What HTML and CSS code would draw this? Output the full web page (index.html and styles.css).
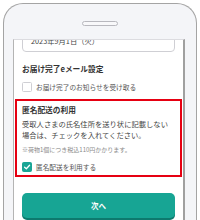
FILE: index.html
```html
<!DOCTYPE html>
<html lang="ja">
<head>
<meta charset="utf-8">
<title>匿名配送</title>
<link rel="stylesheet" href="styles.css">
</head>
<body>
<div class="phone">
  <div class="speaker"></div>
  <div class="screen">
    <div class="content">
      <div class="date-input">2023年9月1日（火）</div>
      <h2 class="sec-title">お届け完了eメール設定</h2>
      <label class="check-row">
        <span class="box"></span>
        <span class="check-label">お届け完了のお知らせを受け取る</span>
      </label>
      <div class="highlight">
        <h2 class="sec-title">匿名配送の利用</h2>
        <p class="desc">受取人さまの氏名住所を送り状に記載しない<br>場合は、チェックを入れてください。</p>
        <p class="note">※荷物1個につき税込110円かかります。</p>
        <label class="check-row checked-row">
          <span class="box checked">
            <svg viewBox="0 0 10 10" width="10" height="10"><path d="M2 5.2 L4.2 7.2 L8.2 2.8" fill="none" stroke="#fff" stroke-width="1.6" stroke-linecap="round" stroke-linejoin="round"/></svg>
          </span>
          <span class="check-label">匿名配送を利用する</span>
        </label>
      </div>
      <div class="next-btn">次へ</div>
    </div>
  </div>
</div>
</body>
</html>
```
FILE: styles.css
```css
* { box-sizing: border-box; }
html, body {
  margin: 0;
  padding: 0;
  width: 200px;
  height: 220px;
  overflow: hidden;
  background: #fff;
  font-family: "Noto Sans CJK JP", "Noto Sans", sans-serif;
}
.phone {
  margin: 3px 3px 0;
  height: 217px;
  border: 1px solid #a4a4a4;
  border-bottom: none;
  border-radius: 20px 20px 0 0;
  background: #f4f5f8;
  display: flex;
  flex-direction: column;
  align-items: stretch;
  overflow: hidden;
}
.speaker {
  align-self: center;
  width: 36px;
  height: 5px;
  margin-top: 17px;
  border: 1px solid #b8b8be;
  border-radius: 3px;
  background: #f8f8fa;
  flex: none;
}
.screen {
  margin: 13px 11px 0 9px;
  flex: 1;
  min-height: 0;
  background: #fff;
  border-top: 1px solid #dcdce0;
  border-left: 1px solid #b4b4b4;
  border-right: 2px solid #a0a0a0;
  overflow: hidden;
}
.content {
  padding: 0 8px 0 8px;
  display: flex;
  flex-direction: column;
}
.date-input {
  margin-top: -10px;
  height: 22px;
  border: 1px solid #cfcfd4;
  border-radius: 4px;
  padding: 0 0 0 8px;
  font-size: 7.3px;
  line-height: 22px;
  color: #444;
  display: flex;
  align-items: center;
}
.sec-title {
  margin: 12px 0 0;
  font-size: 7.7px;
  line-height: 10px;
  font-weight: 700;
  color: #333;
}
.check-row {
  display: flex;
  align-items: center;
  gap: 4px;
  margin-top: 8px;
  height: 10px;
}
.box {
  width: 10px;
  height: 10px;
  border: 1px solid #cfcfd4;
  border-radius: 1.5px;
  background: #fff;
  display: flex;
  align-items: center;
  justify-content: center;
  flex: none;
}
.box.checked {
  background: #1aa595;
  border-color: #1aa595;
}
.box.checked svg { display: block; }
.check-label {
  font-size: 6.7px;
  line-height: 10px;
  color: #555;
}
.highlight {
  margin: 7px -7px 0;
  border: 2px solid #e60012;
  padding: 0 5px 3px 5px;
  display: flex;
  flex-direction: column;
}
.highlight .sec-title { margin-top: 4px; }
.desc {
  margin: 4px 0 0;
  font-size: 7.3px;
  line-height: 11px;
  color: #444;
}
.note {
  margin: 5px 0 0;
  font-size: 6px;
  line-height: 8px;
  color: #8a8a8a;
}
.checked-row { margin-top: 8px; }
.next-btn {
  margin-top: 16px;
  height: 25px;
  flex: none;
  border-radius: 5px;
  background: #17a594;
  box-shadow: 0 2px 0 #0d7a6e;
  color: #fff;
  font-size: 7.5px;
  font-weight: 700;
  display: flex;
  align-items: center;
  justify-content: center;
}
```
